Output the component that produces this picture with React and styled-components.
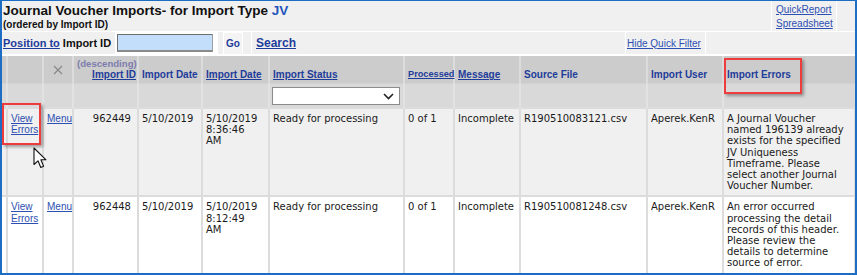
import React from "react";
import styled, { createGlobalStyle } from "styled-components";

const GlobalStyle = createGlobalStyle`
  body {
    margin: 0;
    background: #fff;
  }
`;

const blue = "#1c6dc3";
const headBlue = "#1e3c9a";
const linkBlue = "#2d4fb2";

const Frame = styled.div`
  position: relative;
  width: 857px;
  height: 275px;
  box-sizing: border-box;
  border: 2px solid ${blue};
  border-top-width: 1px;
  background: #fff;
  overflow: hidden;
  font-family: "DejaVu Sans", Verdana, sans-serif;
  font-size: 10px;
  color: #1a1a1a;
`;

const TitleBar = styled.div`
  display: flex;
  height: 30px;
  background: #f0f0f0;
  border-bottom: 1px solid #fff;
`;

const TitleCell = styled.div`
  flex: 1;
  padding: 2px 0 0 1px;
  font-family: "Liberation Sans", Arial, sans-serif;
  font-weight: bold;
`;

const Title = styled.div`
  font-size: 13.5px;
  line-height: 16px;
  color: #111;
`;

const TypeCode = styled.span`
  color: #2255bb;
`;

const Subtitle = styled.div`
  font-size: 10px;
  line-height: 11px;
  color: #111;
`;

const ReportCell = styled.div`
  width: 60px;
  padding-left: 4px;
  border-left: 1px solid #fff;
  border-right: 1px solid #fff;
  display: flex;
  flex-direction: column;
  gap: 3px;
  padding-top: 3px;
`;

const TrailCell = styled.div`
  width: 18px;
`;

const Link = styled.a`
  font-family: "Liberation Sans", Arial, sans-serif;
  font-size: 10px;
  line-height: 11px;
  color: ${linkBlue};
  text-decoration: underline;
  cursor: pointer;
`;

const PositionBar = styled.div`
  display: flex;
  align-items: stretch;
  height: 22px;
  background: #f0f0f0;
  border-bottom: 2px solid #fff;
  font-family: "Liberation Sans", Arial, sans-serif;
  font-weight: bold;
`;

const LabelCell = styled.div`
  width: 112px;
  padding-left: 1px;
  display: flex;
  align-items: center;
  gap: 3px;
  font-size: 11px;
  color: #111;
`;

const BoldLink = styled.a`
  color: ${headBlue};
  text-decoration: underline;
  font-size: ${(p) => p.$size || 11}px;
`;

const InputCell = styled.div`
  width: 101px;
  background: #fff;
  display: flex;
  align-items: center;
  padding-left: 2px;
`;

const IdInput = styled.input`
  box-sizing: border-box;
  width: 96px;
  height: 18px;
  margin: 0;
  background: #c3defa;
  border: 1px solid #a0a0a0;
  border-top-color: #6e6e6e;
  border-left-color: #6e6e6e;
  border-bottom-width: 2px;
  border-bottom-color: #8a8a8a;
  outline: none;
`;

const GoCell = styled.div`
  margin-left: 5px;
  width: 18px;
  border: 1px solid #fff;
  border-bottom: none;
  background: #f4f4f4;
  display: flex;
  align-items: center;
  justify-content: center;
  color: ${headBlue};
  font-size: 10px;
`;

const SearchCell = styled.div`
  margin-left: 8px;
  width: 369px;
  padding-left: 4px;
  border-left: 1px solid #fff;
  display: flex;
  align-items: center;
`;

const HideCell = styled.div`
  width: 78px;
  padding-left: 1px;
  border-left: 1px solid #fff;
  border-right: 1px solid #fff;
  display: flex;
  align-items: center;
  font-weight: normal;
`;

const Grid = styled.table`
  table-layout: fixed;
  border-collapse: collapse;
  width: 853px;
`;

const Col = styled.col`
  width: ${(p) => p.$w}px;
`;

const sep = "#dcdcdc";

const HeadCell = styled.th`
  height: 24px;
  padding: 0 ${(p) => (p.$align === "right" ? 1 : 3)}px 3px 3px;
  vertical-align: bottom;
  text-align: ${(p) => p.$align || "left"};
  background: #cccccc;
  border-left: 2px solid ${sep};
  font-family: "Liberation Sans", Arial, sans-serif;
  font-size: ${(p) => (p.$tight ? 9.2 : 10)}px;
  line-height: 11px;
  font-weight: bold;
  color: ${headBlue};
  white-space: nowrap;
  &:first-child {
    border-left: none;
  }
`;

const HeadLabel = styled.span`
  text-decoration: ${(p) => (p.$sort ? "underline" : "none")};
`;

const Order = styled.div`
  color: #7c7cac;
  font-size: 9.6px;
`;

const FilterCell = styled.td`
  height: 23px;
  padding: 0 2px;
  background: #d9d9d9;
  border-left: 2px solid #e2e2e2;
  border-top: 1px solid #d2d2d2;
  &:first-child {
    border-left: none;
  }
`;

const StatusSelect = styled.div`
  box-sizing: border-box;
  width: 128px;
  height: 18px;
  margin-top: 1px;
  background: #fff;
  border: 1px solid #8c8c8c;
  display: flex;
  align-items: center;
  justify-content: flex-end;
  padding-right: 5px;
`;

const Cell = styled.td`
  padding: 4px 3px 4px;
  vertical-align: top;
  text-align: ${(p) => p.$align || "left"};
  padding-right: ${(p) => (p.$align === "right" ? 6 : 3)}px;
  background: ${(p) => (p.$alt ? "#ffffff" : "#f0f0f0")};
  border-left: 2px solid ${sep};
  border-top: 2px solid ${sep};
  line-height: 11.2px;
  &:first-child {
    border-left: none;
  }
  &:last-child {
    border-right: 2px solid ${sep};
  }
`;

const Highlight = styled.div`
  position: absolute;
  left: ${(p) => p.$x}px;
  top: ${(p) => p.$y}px;
  width: ${(p) => p.$w}px;
  height: ${(p) => p.$h}px;
  box-sizing: border-box;
  border: 2px solid #ee3b3b;
  box-shadow: 2px 2px 3px rgba(0, 0, 0, 0.35);
  pointer-events: none;
`;

const Pointer = styled.svg`
  position: absolute;
  left: 31px;
  top: 146px;
`;

const CloseMark = () => (
  <svg width="10" height="10" viewBox="0 0 10 10" style={{ display: "block", margin: "0 auto 5px" }}>
    <path d="M1 1 L9 9 M9 1 L1 9" stroke="#8a8a8a" strokeWidth="1.3" />
  </svg>
);

const imports = [
  {
    id: "962449",
    date: "5/10/2019",
    time: "8:36:46",
    status: "Ready for processing",
    processed: "0 of 1",
    message: "Incomplete",
    file: "R190510083121.csv",
    user: "Aperek.KenR",
    error:
      "A Journal Voucher named 196139 already exists for the specified JV Uniqueness Timeframe. Please select another Journal Voucher Number.",
  },
  {
    id: "962448",
    date: "5/10/2019",
    time: "8:12:49",
    status: "Ready for processing",
    processed: "0 of 1",
    message: "Incomplete",
    file: "R190510081248.csv",
    user: "Aperek.KenR",
    error:
      "An error occurred processing the detail records of this header. Please review the details to determine source of error.",
  },
];

const widths = [5, 36, 30, 65, 64, 67, 135, 50, 66, 127, 76, 132];

function App() {
  return (
    <>
      <GlobalStyle />
      <Frame>
        <TitleBar>
          <TitleCell>
            <Title>
              Journal Voucher Imports- for Import Type <TypeCode>JV</TypeCode>
            </Title>
            <Subtitle>(ordered by Import ID)</Subtitle>
          </TitleCell>
          <ReportCell>
            <Link>QuickReport</Link>
            <Link>Spreadsheet</Link>
          </ReportCell>
          <TrailCell />
        </TitleBar>

        <PositionBar>
          <LabelCell>
            <BoldLink>Position to</BoldLink> Import ID
          </LabelCell>
          <InputCell>
            <IdInput />
          </InputCell>
          <GoCell>Go</GoCell>
          <SearchCell>
            <BoldLink $size={12}>Search</BoldLink>
          </SearchCell>
          <HideCell>
            <Link>Hide Quick Filter</Link>
          </HideCell>
        </PositionBar>

        <Grid>
          <colgroup>
            {widths.map((w, i) => (
              <Col key={i} $w={w} />
            ))}
          </colgroup>
          <thead>
            <tr>
              <HeadCell />
              <HeadCell />
              <HeadCell>
                <CloseMark />
              </HeadCell>
              <HeadCell $align="right">
                <Order>(descending)</Order>
                <HeadLabel $sort>Import ID</HeadLabel>
              </HeadCell>
              <HeadCell>
                <HeadLabel>Import Date</HeadLabel>
              </HeadCell>
              <HeadCell>
                <HeadLabel $sort>Import Date</HeadLabel>
              </HeadCell>
              <HeadCell>
                <HeadLabel $sort>Import Status</HeadLabel>
              </HeadCell>
              <HeadCell $tight>
                <HeadLabel $sort>Processed</HeadLabel>
              </HeadCell>
              <HeadCell>
                <HeadLabel $sort>Message</HeadLabel>
              </HeadCell>
              <HeadCell>
                <HeadLabel>Source File</HeadLabel>
              </HeadCell>
              <HeadCell>
                <HeadLabel>Import User</HeadLabel>
              </HeadCell>
              <HeadCell>
                <HeadLabel>Import Errors</HeadLabel>
              </HeadCell>
            </tr>
            <tr>
              {widths.map((w, i) => (
                <FilterCell key={i}>
                  {i === 6 && (
                    <StatusSelect>
                      <svg width="11" height="7" viewBox="0 0 11 7">
                        <path d="M1 1 L5.5 5.5 L10 1" fill="none" stroke="#222" strokeWidth="1.6" />
                      </svg>
                    </StatusSelect>
                  )}
                </FilterCell>
              ))}
            </tr>
          </thead>
          <tbody>
            {imports.map((row, r) => (
              <tr key={row.id}>
                <Cell $alt={r === 1} />
                <Cell $alt={r === 1}>
                  <Link>View Errors</Link>
                </Cell>
                <Cell $alt={r === 1}>
                  <Link>Menu</Link>
                </Cell>
                <Cell $alt={r === 1} $align="right">
                  {row.id}
                </Cell>
                <Cell $alt={r === 1}>{row.date}</Cell>
                <Cell $alt={r === 1}>
                  {row.date}
                  <br />
                  {row.time}
                  <br />
                  AM
                </Cell>
                <Cell $alt={r === 1}>{row.status}</Cell>
                <Cell $alt={r === 1}>{row.processed}</Cell>
                <Cell $alt={r === 1}>{row.message}</Cell>
                <Cell $alt={r === 1}>{row.file}</Cell>
                <Cell $alt={r === 1}>{row.user}</Cell>
                <Cell $alt={r === 1}>{row.error}</Cell>
              </tr>
            ))}
          </tbody>
        </Grid>

        <Highlight $x={0} $y={102} $w={39} $h={42} />
        <Highlight $x={722} $y={57} $w={78} $h={36} />
        <Pointer width="14" height="23" viewBox="0 0 14 23">
          <path
            d="M1 1 L1 17.5 L5 13.8 L7.8 20.5 L10.6 19.3 L7.9 12.8 L13 12.8 Z"
            fill="#fff"
            stroke="#111"
            strokeWidth="1.1"
            strokeLinejoin="round"
          />
        </Pointer>
      </Frame>
    </>
  );
}

export default App;
